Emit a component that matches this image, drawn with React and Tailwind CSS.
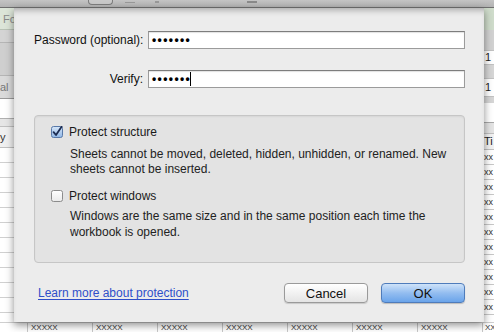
import React from "react"

const FONT = { fontFamily: '"Liberation Sans", Arial, sans-serif' }

const CheckBox = ({ checked }) => (
  <svg width="12" height="12" viewBox="0 0 12 12" className="shrink-0">
    <defs>
      <linearGradient id={checked ? "cbOn" : "cbOff"} x1="0" y1="0" x2="0" y2="1">
        {checked ? (
          <>
            <stop offset="0" stopColor="#d6e6f8" />
            <stop offset="1" stopColor="#8fb6e6" />
          </>
        ) : (
          <>
            <stop offset="0" stopColor="#ffffff" />
            <stop offset="1" stopColor="#eaeaea" />
          </>
        )}
      </linearGradient>
    </defs>
    <rect
      x="0.5"
      y="0.5"
      width="11"
      height="11"
      rx="2"
      fill={`url(#${checked ? "cbOn" : "cbOff"})`}
      stroke={checked ? "#5878a8" : "#8c8c8c"}
    />
    {checked && (
      <path d="M2.6 6.2 L5 9 L10.6 0.8" fill="none" stroke="#1c2c52" strokeWidth="1.8" strokeLinecap="round" strokeLinejoin="round" />
    )}
  </svg>
)

// left edge of the spreadsheet window behind the sheet
const LeftStrip = () => (
  <div className="w-[14px] shrink-0 flex flex-col bg-white">
    <div className="h-[22px] bg-[#dce5d8] border-b border-[#b8c2b5] text-[11px] leading-[22px] text-[#8a8a8a] pl-[3px] overflow-hidden whitespace-nowrap">
      Fo
    </div>
    <div className="h-[12px] bg-[#d4d4d4]" />
    <div className="h-[34px] bg-[#cfcfcf] border-y border-[#b5b5b5]" />
    <div className="h-[22px] bg-[#dadada] text-[11px] leading-[22px] text-[#777] overflow-hidden">al</div>
    <div className="h-[20px] bg-white border-t border-[#9a9a9a]" />
    <div className="h-[8px] bg-[#e6e6e6] border-t border-[#b0b0b0]" />
    <div className="h-[22px] bg-[#f0f0f0] border-y border-[#c0c0c0] text-[11px] leading-[20px] text-[#333] overflow-hidden">y</div>
    {Array.from({ length: 11 }).map((_, i) => (
      <div key={i} className="h-[15px] border-b border-[#d0d0d0] shrink-0" />
    ))}
  </div>
)

const RightStrip = () => (
  <div className="w-[10px] shrink-0 flex flex-col bg-white">
    <div className="h-[22px] bg-[#cfdccb]" />
    <div className="h-[20px] bg-[#d2d2d2]" />
    <div className="h-[15px] bg-white border-y border-[#c2c2c2] text-[11px] leading-[13px] text-[#222] pl-[1px] overflow-hidden">1</div>
    <div className="h-[13px] bg-[#d6d6d6]" />
    <div className="h-[19px] bg-white border-y border-[#c2c2c2] text-[11px] leading-[17px] text-[#222] pl-[1px] overflow-hidden">1</div>
    <div className="h-[6px] bg-[#d6d6d6]" />
    <div className="h-[20px] bg-white border-b border-[#a8a8a8]" />
    <div className="h-[10px] bg-[#e4e4e4]" />
    <div className="h-[17px] bg-[#f2f2f2] border-y border-[#c0c0c0] text-[11px] leading-[15px] text-[#222] overflow-hidden">Ti</div>
    {Array.from({ length: 11 }).map((_, i) => (
      <div key={i} className="h-[15px] border-b border-[#c8c8c8] shrink-0 text-[9px] leading-[14px] text-[#333] overflow-hidden">
        xx
      </div>
    ))}
  </div>
)

const PasswordRow = ({ label, cursor }) => (
  <div className="flex items-center">
    <div className="w-[109px] shrink-0 text-right text-[12px] text-[#111] whitespace-nowrap">{label}</div>
    <div className="ml-[5px] w-[317px] shrink-0 h-[18px] bg-white border border-[#9b9b9b] border-t-[#7d7d7d] shadow-[inset_0_1px_1px_rgba(0,0,0,0.12)] flex items-center pl-[3px]">
      <span className="text-[12px] font-bold tracking-[1.4px] text-black leading-none">•••••••</span>
      {cursor && <span className="-ml-[1px] w-[1px] h-[14px] bg-black" />}
    </div>
  </div>
)

export default function App() {
  return (
    <div className="w-[494px] h-[332px] overflow-hidden bg-white flex flex-col" style={FONT}>
      {/* toolbar of the window behind */}
      <div className="h-[8px] shrink-0 bg-gradient-to-b from-[#c4c4c4] to-[#b2b2b2] border-b border-[#6f6f6f] flex items-start">
        <div className="ml-[88px] w-[25px] h-[5px] rounded-b-[4px] border border-t-0 border-[#7c7c7c] bg-[#c9c9c9]" />
        <div className="ml-[12px] mt-[2px] w-[10px] h-[1px] bg-[#999]" />
        <div className="ml-[20px] mt-[1px] w-[4px] h-[2px] bg-[#999]" />
        <div className="ml-[88px] mt-[1px] w-[10px] h-[2px] bg-[#8a8a8a]" />
      </div>

      <div className="flex h-[314px] shrink-0">
        <LeftStrip />

        {/* sheet */}
        <div className="relative z-10 w-[470px] shrink-0 bg-[#ececec] shadow-[0_3px_8px_rgba(0,0,0,0.45),inset_0_6px_6px_-4px_rgba(0,0,0,0.3)] flex flex-col pt-[23px] pl-[20px] pr-[19px]">
          <PasswordRow label="Password (optional):" />
          <div className="h-[21px]" />
          <PasswordRow label="Verify:" cursor />

          {/* options group */}
          <div className="mt-[27px] h-[148px] rounded-[4px] border border-[#c6c6c6] bg-[#e3e3e3] shadow-[inset_0_1px_2px_rgba(0,0,0,0.06)] pt-[8px] pl-[16px] pr-[10px] text-[12px] text-[#1a1a1a]">
            <div className="h-[16px] flex items-center gap-[6px]">
              <CheckBox checked />
              <span>Protect structure</span>
            </div>
            <p className="mt-[7px] ml-[19px] leading-[15px] text-[#222]">
              Sheets cannot be moved, deleted, hidden, unhidden, or renamed. New
              <br />
              sheets cannot be inserted.
            </p>
            <div className="mt-[11px] h-[16px] flex items-center gap-[6px]">
              <CheckBox />
              <span>Protect windows</span>
            </div>
            <p className="mt-[5px] ml-[19px] leading-[15.5px] text-[#222]">
              Windows are the same size and in the same position each time the
              <br />
              workbook is opened.
            </p>
          </div>

          {/* footer */}
          <div className="mt-[20px] flex items-center h-[20px]">
            <a className="ml-[4px] text-[12px] text-[#2f4fc9] underline underline-offset-[2px] cursor-pointer">
              Learn more about protection
            </a>
            <div className="ml-auto flex gap-[13px]">
              <button className="w-[84px] h-[20px] rounded-[4px] border border-[#9a9a9a] bg-gradient-to-b from-[#ffffff] to-[#e4e4e4] shadow-[0_1px_1px_rgba(0,0,0,0.15)] text-[13px] text-[#111] leading-none">
                Cancel
              </button>
              <button className="w-[84px] h-[20px] rounded-[4px] border border-[#4f7cbb] bg-gradient-to-b from-[#cfe3f9] via-[#93bdf0] to-[#6aa4ea] shadow-[0_1px_1px_rgba(0,0,0,0.2)] text-[13px] text-[#111] leading-none">
                OK
              </button>
            </div>
          </div>
        </div>

        <RightStrip />
      </div>

      {/* spreadsheet row peeking below the sheet */}
      <div className="h-[10px] shrink-0 flex bg-white border-t border-[#cfcfcf]">
        <div className="w-[28px] shrink-0 border-r border-[#c8c8c8]" />
        {Array.from({ length: 7 }).map((_, i) => (
          <div
            key={i}
            className="w-[65px] shrink-0 border-r border-[#c8c8c8] pl-[3px] text-[8px] leading-[9px] text-[#333] overflow-hidden"
          >
            XXXXX
          </div>
        ))}
        <div className="flex-1 pl-[2px] text-[8px] leading-[9px] text-[#333] overflow-hidden whitespace-nowrap">XX</div>
      </div>
    </div>
  )
}
